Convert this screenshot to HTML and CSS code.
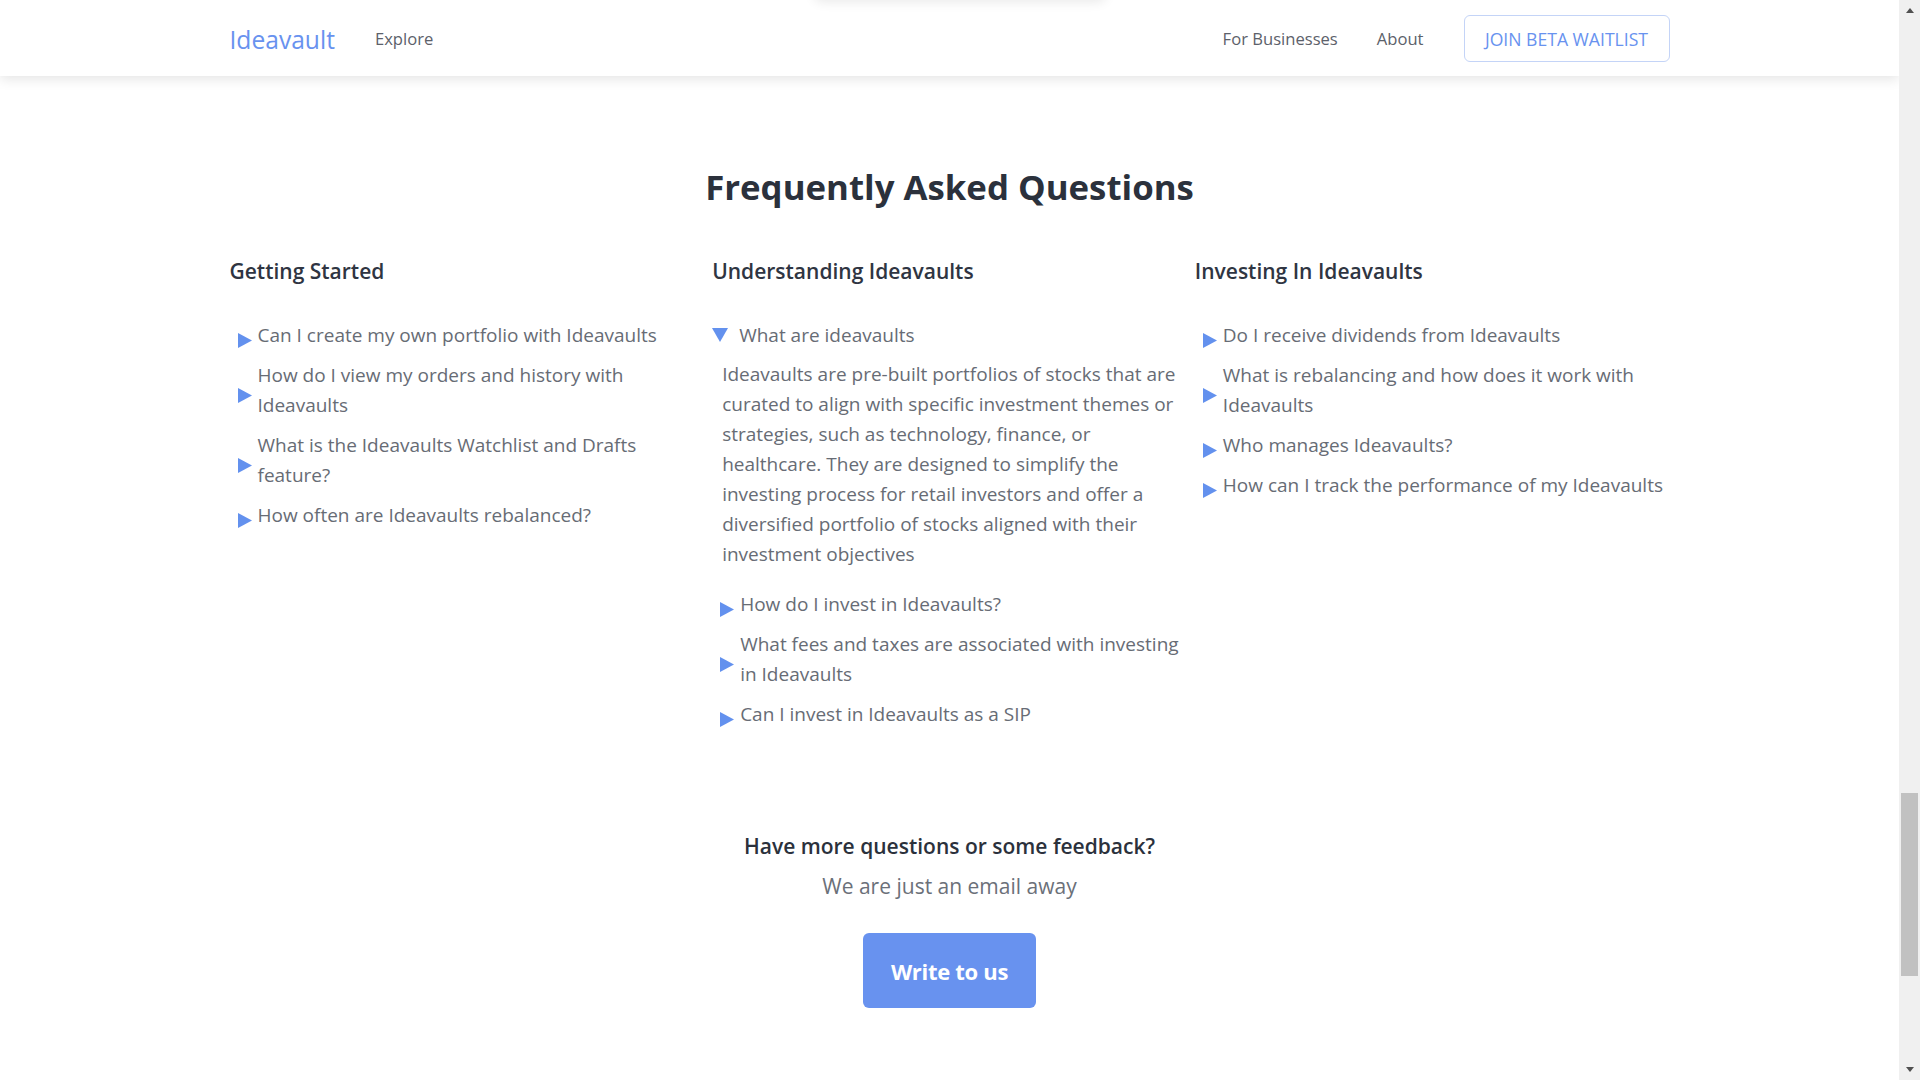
FILE: index.html
```html
<!DOCTYPE html>
<html lang="en">
<head>
<meta charset="utf-8">
<title>Ideavault – FAQ</title>
<link rel="stylesheet" href="styles.css">
</head>
<body>
<div class="page">
  <div class="ghost-menu"></div>
  <header class="navbar">
    <div class="nav-inner">
      <a class="logo" href="#">Ideavault</a>
      <a class="nav-link" href="#">Explore</a>
      <nav class="nav-right">
        <a class="nav-link" href="#">For Businesses</a>
        <a class="nav-link" href="#">About</a>
        <a class="btn-outline" href="#">JOIN BETA WAITLIST</a>
      </nav>
    </div>
  </header>

  <main class="faq">
    <h1 class="faq-title">Frequently Asked Questions</h1>
    <div class="faq-grid">
      <section class="faq-col">
        <h2 class="col-title">Getting Started</h2>
        <ul class="faq-list">
          <li class="faq-item"><span class="marker"><svg class="tri-right" viewBox="0 0 14 15"><polygon points="0,0 14,7.5 0,15"/></svg></span><span class="q">Can I create my own portfolio with Ideavaults</span></li>
          <li class="faq-item"><span class="marker"><svg class="tri-right" viewBox="0 0 14 15"><polygon points="0,0 14,7.5 0,15"/></svg></span><span class="q">How do I view my orders and history with Ideavaults</span></li>
          <li class="faq-item"><span class="marker"><svg class="tri-right" viewBox="0 0 14 15"><polygon points="0,0 14,7.5 0,15"/></svg></span><span class="q">What is the Ideavaults Watchlist and Drafts feature?</span></li>
          <li class="faq-item"><span class="marker"><svg class="tri-right" viewBox="0 0 14 15"><polygon points="0,0 14,7.5 0,15"/></svg></span><span class="q">How often are Ideavaults rebalanced?</span></li>
        </ul>
      </section>
      <section class="faq-col">
        <h2 class="col-title">Understanding Ideavaults</h2>
        <ul class="faq-list">
          <li class="faq-open">
            <div class="faq-item"><span class="marker open"><svg class="tri-down" viewBox="0 0 16 14"><polygon points="0,0 16,0 8,14"/></svg></span><span class="q">What are ideavaults</span></div>
            <p class="answer">Ideavaults are pre-built portfolios of stocks that are curated to align with specific investment themes or strategies, such as technology, finance, or healthcare. They are designed to simplify the investing process for retail investors and offer a diversified portfolio of stocks aligned with their investment objectives</p>
          </li>
          <li class="faq-item"><span class="marker"><svg class="tri-right" viewBox="0 0 14 15"><polygon points="0,0 14,7.5 0,15"/></svg></span><span class="q">How do I invest in Ideavaults?</span></li>
          <li class="faq-item"><span class="marker"><svg class="tri-right" viewBox="0 0 14 15"><polygon points="0,0 14,7.5 0,15"/></svg></span><span class="q">What fees and taxes are associated with investing in Ideavaults</span></li>
          <li class="faq-item"><span class="marker"><svg class="tri-right" viewBox="0 0 14 15"><polygon points="0,0 14,7.5 0,15"/></svg></span><span class="q">Can I invest in Ideavaults as a SIP</span></li>
        </ul>
      </section>
      <section class="faq-col">
        <h2 class="col-title">Investing In Ideavaults</h2>
        <ul class="faq-list">
          <li class="faq-item"><span class="marker"><svg class="tri-right" viewBox="0 0 14 15"><polygon points="0,0 14,7.5 0,15"/></svg></span><span class="q">Do I receive dividends from Ideavaults</span></li>
          <li class="faq-item"><span class="marker"><svg class="tri-right" viewBox="0 0 14 15"><polygon points="0,0 14,7.5 0,15"/></svg></span><span class="q">What is rebalancing and how does it work with Ideavaults</span></li>
          <li class="faq-item"><span class="marker"><svg class="tri-right" viewBox="0 0 14 15"><polygon points="0,0 14,7.5 0,15"/></svg></span><span class="q">Who manages Ideavaults?</span></li>
          <li class="faq-item"><span class="marker"><svg class="tri-right" viewBox="0 0 14 15"><polygon points="0,0 14,7.5 0,15"/></svg></span><span class="q">How can I track the performance of my Ideavaults</span></li>
        </ul>
      </section>
    </div>

    <section class="contact">
      <h3 class="contact-title">Have more questions or some feedback?</h3>
      <p class="contact-sub">We are just an email away</p>
      <a class="btn-primary" href="#">Write to us</a>
    </section>
  </main>
</div>

<div class="scrollbar">
  <div class="sb-btn"><span class="sb-up"></span></div>
  <div class="sb-track"><div class="sb-thumb"></div></div>
  <div class="sb-btn"><span class="sb-down"></span></div>
</div>
</body>
</html>
```
FILE: styles.css
```css
* { box-sizing: border-box; }

html, body {
  margin: 0;
  height: 100%;
}

body {
  display: flex;
  overflow: hidden;
  background: #ffffff;
  font-family: "Open Sans", "Noto Sans", sans-serif;
  color: #676c75;
}

a { text-decoration: none; }

.page {
  flex: 1;
  position: relative;
  height: 1080px;
  overflow: hidden;
  background: #ffffff;
}

/* shadow of a menu sitting just above the viewport */
.ghost-menu {
  position: absolute;
  top: -40px;
  left: 814px;
  width: 292px;
  height: 40px;
  background: #ffffff;
  border-radius: 8px;
  box-shadow: 0 2px 12px rgba(0, 0, 0, 0.09);
  z-index: 5;
}

/* ---------- navbar ---------- */
.navbar {
  position: relative;
  z-index: 3;
  height: 76px;
  background: #ffffff;
  box-shadow: 0 3px 12px rgba(0, 0, 0, 0.11);
}

.nav-inner {
  width: 1440px;
  height: 100%;
  margin: 0 auto;
  display: flex;
  align-items: center;
}

.logo {
  font-size: 24.6px;
  font-weight: 500;
  color: #6892ef;
  margin-right: 40px;
  line-height: 1;
  padding-top: 4px;
}

.nav-link {
  font-size: 16.6px;
  color: #5c616a;
  line-height: 1;
  padding-top: 2px;
}

.nav-right {
  margin-left: auto;
  display: flex;
  align-items: center;
  gap: 40px;
}

.nav-right .nav-link + .nav-link {
  margin-left: -1px;
}

.btn-outline {
  display: inline-flex;
  align-items: center;
  justify-content: center;
  width: 206px;
  height: 47px;
  border: 1px solid #c4d4f7;
  border-radius: 6px;
  font-size: 17.6px;
  color: #6892ef;
  margin-top: 1px;
}

/* ---------- faq ---------- */
.faq {
  padding-top: 90px;
}

.faq-title {
  margin: 0 0 48px;
  text-align: center;
  font-size: 34.8px;
  font-weight: 700;
  line-height: 42px;
  color: #2b313c;
}

.faq-grid {
  width: 1440px;
  margin: 0 auto;
  display: grid;
  grid-template-columns: repeat(3, 1fr);
  column-gap: 8px;
}

.col-title {
  margin: 0 0 34px;
  font-size: 21px;
  font-weight: 600;
  line-height: 30px;
  color: #2f3542;
}

.faq-list {
  list-style: none;
  margin: 0;
  padding: 0;
  display: flex;
  flex-direction: column;
  gap: 10px;
}

.faq-item {
  display: flex;
  align-items: center;
  font-size: 19px;
  line-height: 30px;
  color: #676c75;
}

.marker {
  flex: none;
  display: flex;
  width: 28px;
  padding-left: 8px;
  margin-top: 10px;
}

.marker.open {
  width: 27px;
  padding-left: 0;
  margin-top: 0;
}

.tri-right {
  width: 14px;
  height: 15px;
  fill: #6391ee;
}

.tri-down {
  width: 16px;
  height: 14px;
  fill: #6391ee;
}

.answer {
  margin: 9px 0 10px 10px;
  font-size: 19px;
  line-height: 30px;
  color: #676c75;
}

/* ---------- contact ---------- */
.contact {
  margin-top: 102px;
  display: flex;
  flex-direction: column;
  align-items: center;
}

.contact-title {
  margin: 0;
  font-size: 21px;
  font-weight: 600;
  line-height: 30px;
  color: #2b313c;
}

.contact-sub {
  margin: 10px 0 0;
  font-size: 21px;
  font-weight: 400;
  line-height: 30px;
  color: #6b7079;
}

.btn-primary {
  margin-top: 32px;
  display: inline-flex;
  align-items: center;
  justify-content: center;
  width: 173px;
  height: 75px;
  border-radius: 6px;
  background: #6892ef;
  color: #ffffff;
  font-size: 22px;
  font-weight: 700;
  letter-spacing: -0.3px;
}

/* ---------- scrollbar ---------- */
.scrollbar {
  flex: none;
  width: 21px;
  height: 1080px;
  background: #f0f0f0;
  display: flex;
  flex-direction: column;
}

.sb-btn {
  flex: none;
  height: 21px;
  display: flex;
  align-items: center;
  justify-content: center;
}

.sb-up {
  width: 0;
  height: 0;
  border-left: 4.5px solid transparent;
  border-right: 4.5px solid transparent;
  border-bottom: 5px solid #505050;
}

.sb-down {
  width: 0;
  height: 0;
  border-left: 4.5px solid transparent;
  border-right: 4.5px solid transparent;
  border-top: 5px solid #505050;
}

.sb-track {
  flex: 1;
  padding: 0 2px;
}

.sb-thumb {
  margin-top: 772px;
  height: 183px;
  background: #c1c1c1;
}
```
